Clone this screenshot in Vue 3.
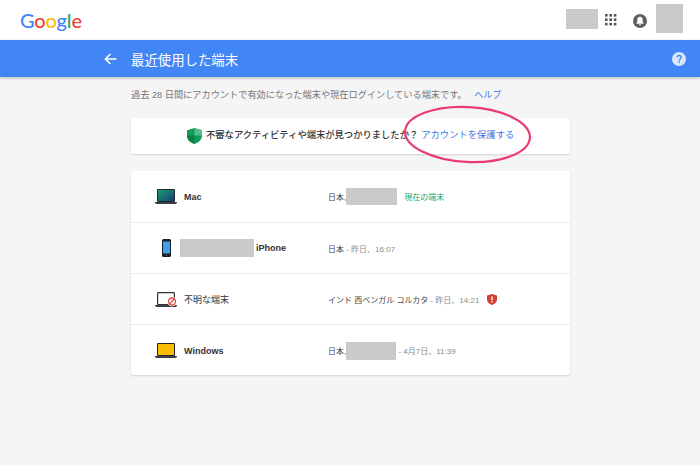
<template>
  <div class="page">
    <header class="topbar">
      <div class="logo"><span class="c-blue">G</span><span class="c-red">o</span><span class="c-yellow">o</span><span class="c-blue">g</span><span class="c-green">l</span><span class="c-red">e</span></div>
      <div class="top-right">
        <div class="mask mask-name"></div>
        <svg class="apps" width="12" height="12" viewBox="0 0 12 12">
          <template v-for="y in [0, 4.4, 8.8]" :key="y">
            <rect v-for="x in [0, 4.4, 8.8]" :key="x" :x="x" :y="y" width="2.6" height="2.6" fill="#555" />
          </template>
        </svg>
        <svg class="bell" width="14" height="14" viewBox="0 0 14 14">
          <circle cx="7" cy="7" r="7" fill="#5f5f5f" />
          <path d="M7 2.8c-1.7 0-2.7 1.3-2.7 3v2.3L3.4 9.4v.4h7.2v-.4L9.7 8.1V5.8c0-1.7-1-3-2.7-3zM5.9 10.3a1.1 1.1 0 0 0 2.2 0z" fill="#fff" />
        </svg>
        <div class="mask mask-avatar"></div>
      </div>
    </header>

    <div class="bluebar">
      <svg class="back" width="13" height="12" viewBox="0 0 13 12">
        <path d="M12.5 6H1.8M6.4 1 1.4 6l5 5" fill="none" stroke="#fff" stroke-width="1.6" />
      </svg>
      <h1>最近使用した端末</h1>
      <svg class="help" width="14" height="14" viewBox="0 0 14 14">
        <circle cx="7" cy="7" r="7" fill="#dbe6fd" />
        <path d="M4.9 5.4C5 4.2 5.9 3.5 7 3.5c1.200 0 2.100.8 2.100 1.900 0 1.500-1.700 1.500-1.700 3" fill="none" stroke="#4285f4" stroke-width="1.4" />
        <rect x="6.500" y="9.300" width="1.500" height="1.500" fill="#4285f4" />
      </svg>
    </div>

    <main class="content">
      <p class="intro">過去 28 日間にアカウントで有効になった端末や現在ログインしている端末です。 <a class="link help-link">ヘルプ</a></p>

      <section class="card notice">
        <svg class="shield" width="15" height="16" viewBox="0 0 15 16">
          <path d="M7.500 0 15 2.300v5.200c0 4-3 7-7.500 8.500C3 14.500 0 11.500 0 7.500V2.300z" fill="#0f9d58" />
          <path d="M7.500 0 15 2.300v5.200H7.500z" fill="#57bb8a" />
          <path d="M0 7.500h7.500V16C3 14.500 0 11.500 0 7.500z" fill="#0b8043" />
        </svg>
        <span class="notice-text">不審なアクティビティや端末が見つかりましたか？</span>
        <a class="link">アカウントを保護する</a>
      </section>

      <section class="card devices">
        <div class="row">
          <div class="icon-cell">
            <svg width="22" height="15" viewBox="0 0 22 15">
              <defs>
                <linearGradient id="macscreen" x1="0" y1="0" x2="1" y2="1">
                  <stop offset="0" stop-color="#1f9a6a" />
                  <stop offset="0.55" stop-color="#146c78" />
                  <stop offset="1" stop-color="#1a3a78" />
                </linearGradient>
              </defs>
              <rect x="2" y="0" width="18" height="13" rx="1" fill="#1d2730" />
              <rect x="3" y="1" width="16" height="11" fill="url(#macscreen)" />
              <path d="M0 13h22v1l-1.500 1h-19L0 14z" fill="#3b4046" />
            </svg>
          </div>
          <div class="name">Mac</div>
          <div class="where">
            <span>日本,</span><span class="mask mask-loc"></span><span class="current">現在の端末</span>
          </div>
        </div>

        <div class="row">
          <div class="icon-cell">
            <svg width="9" height="18" viewBox="0 0 9 18">
              <rect width="9" height="18" rx="1.500" fill="#1b1f24" />
              <rect x="1" y="2.500" width="7" height="12" fill="#3f9fe8" />
              <circle cx="4.500" cy="16.200" r="0.800" fill="#666" />
            </svg>
          </div>
          <div class="name iphone"><span class="mask mask-phone"></span><span>iPhone</span></div>
          <div class="where"><span>日本</span><span class="when"> - 昨日、16:07</span></div>
        </div>

        <div class="row">
          <div class="icon-cell">
            <svg width="22" height="15" viewBox="0 0 22 15">
              <rect x="2.600" y="0.600" width="16.800" height="12" rx="0.800" fill="#fff" stroke="#333" stroke-width="1.200" />
              <path d="M0 13h22v1l-1.500 1h-19L0 14z" fill="#3b4046" />
              <circle cx="17" cy="9.500" r="4.800" fill="#fff" />
              <circle cx="17" cy="9.500" r="3.500" fill="none" stroke="#e8453c" stroke-width="1.300" />
              <path d="M14.500 12 19.500 7" stroke="#e8453c" stroke-width="1.300" />
            </svg>
          </div>
          <div class="name unknown">不明な端末</div>
          <div class="where">
            <span>インド 西ベンガル コルカタ</span><span class="when"> - 昨日、14:21</span>
            <svg class="alert" width="10" height="11" viewBox="0 0 10 11">
              <path d="M5 0 10 1.500v3.700C10 8 8 10 5 11 2 10 0 8 0 5.200V1.500z" fill="#d23f31" />
              <rect x="4.300" y="2.400" width="1.400" height="3.800" fill="#fff" />
              <rect x="4.300" y="7" width="1.400" height="1.400" fill="#fff" />
            </svg>
          </div>
        </div>

        <div class="row">
          <div class="icon-cell">
            <svg width="22" height="15" viewBox="0 0 22 15">
              <rect x="2" y="0" width="18" height="13" rx="1" fill="#22252a" />
              <rect x="3" y="1" width="16" height="11" fill="#fbbc05" />
              <path d="M0 13h22v1l-1.500 1h-19L0 14z" fill="#3b4046" />
            </svg>
          </div>
          <div class="name low">Windows</div>
          <div class="where low">
            <span>日本,</span><span class="mask mask-loc2"></span><span class="when"> - 4月7日、11:39</span>
          </div>
        </div>
      </section>
    </main>

    <svg class="circle-note" width="136" height="64" viewBox="0 0 136 64">
      <ellipse cx="67.500" cy="30.500" rx="62.500" ry="27.500" transform="rotate(3 67.500 30.500)" fill="none" stroke="#ea3a78" stroke-width="2.200" />
    </svg>
  </div>
</template>

<script setup>
</script>

<style>
html,
body {
  margin: 0;
  background: #f5f5f5;
}
</style>

<style scoped>
.page {
  position: relative;
  width: 700px;
  height: 465px;
  overflow: hidden;
  background: #f5f5f5;
  font-family: "Liberation Sans", "Noto Sans CJK JP", sans-serif;
  color: #333;
}

.topbar {
  height: 40px;
  background: #fff;
  display: flex;
  align-items: center;
  justify-content: space-between;
  padding: 0 17px 0 20px;
}

.logo {
  font-family: Lato, sans-serif;
  font-size: 20px;
  font-weight: 500;
  line-height: 40px;
  letter-spacing: -0.200px;
  margin-top: -1px;
}

.c-blue { color: #4285f4; }
.c-red { color: #ea4335; }
.c-yellow { color: #fbbc05; }
.c-green { color: #34a853; }

.top-right {
  display: flex;
  align-items: center;
}

.mask {
  background: #cacaca;
  display: inline-block;
}

.mask-name {
  width: 32px;
  height: 20px;
  margin-top: -2px;
}

.apps {
  margin-left: 7px;
}

.bell {
  margin-left: 16px;
  margin-top: 1px;
}

.mask-avatar {
  width: 27px;
  height: 29px;
  margin-left: 9px;
  margin-top: -3px;
}

.bluebar {
  height: 37px;
  background: #4285f4;
  display: flex;
  align-items: center;
  padding: 0 14px 0 104px;
  box-shadow: 0 1px 3px rgba(0, 0, 0, 0.25);
  position: relative;
}

.bluebar h1 {
  margin: 0 0 0 14px;
  font-size: 13.400px;
  font-weight: 400;
  color: #fff;
  flex: 1;
}

.content {
  width: 439px;
  margin-left: 131px;
}

.intro {
  margin: 0;
  padding-top: 12px;
  height: 29px;
  font-size: 9.200px;
  line-height: 13px;
  color: #757575;
}

.link {
  color: #3b78e7;
}

.help-link {
  margin-left: 5px;
  font-size: 9px;
}

.card {
  background: #fff;
  border-radius: 2px;
  box-shadow: 0 1px 2px rgba(0, 0, 0, 0.14);
}

.notice {
  height: 36px;
  display: flex;
  align-items: center;
  padding-left: 56px;
  font-size: 9.300px;
  line-height: 13px;
}

.notice .link {
  margin-top: -2px;
  margin-left: 3px;
}

.shield {
  margin-right: 4px;
}

.notice-text {
  color: #333;
  font-weight: 500;
  margin-top: -2px;
}

.devices {
  margin-top: 17px;
}

.row {
  height: 51px;
  display: flex;
  align-items: center;
  box-sizing: border-box;
}

.row + .row {
  border-top: 1px solid #ececec;
}

.icon-cell {
  width: 53px;
  padding-left: 24px;
  box-sizing: border-box;
  display: flex;
  justify-content: center;
  padding-right: 7px;
}

.name {
  width: 144px;
  font-size: 9px;
  font-weight: 700;
  color: #333;
}

.iphone {
  display: flex;
  align-items: center;
  margin-left: -4px;
  width: 148px;
}

.mask-phone {
  width: 74px;
  height: 18px;
  margin-right: 2px;
  margin-top: -1px;
}

.unknown {
  font-weight: 400;
}

.where {
  display: flex;
  align-items: center;
  font-size: 8px;
  color: #444;
  white-space: pre;
}

.low {
  margin-top: 1px;
}

.when {
  color: #8a8a8a;
}

.current {
  color: #1fa463;
  margin-left: 7px;
}

.mask-loc {
  width: 51px;
  height: 17px;
}

.mask-loc2 {
  width: 50px;
  height: 18px;
}

.alert {
  margin-left: 8px;
}

.circle-note {
  position: absolute;
  left: 400px;
  top: 104px;
}
</style>
